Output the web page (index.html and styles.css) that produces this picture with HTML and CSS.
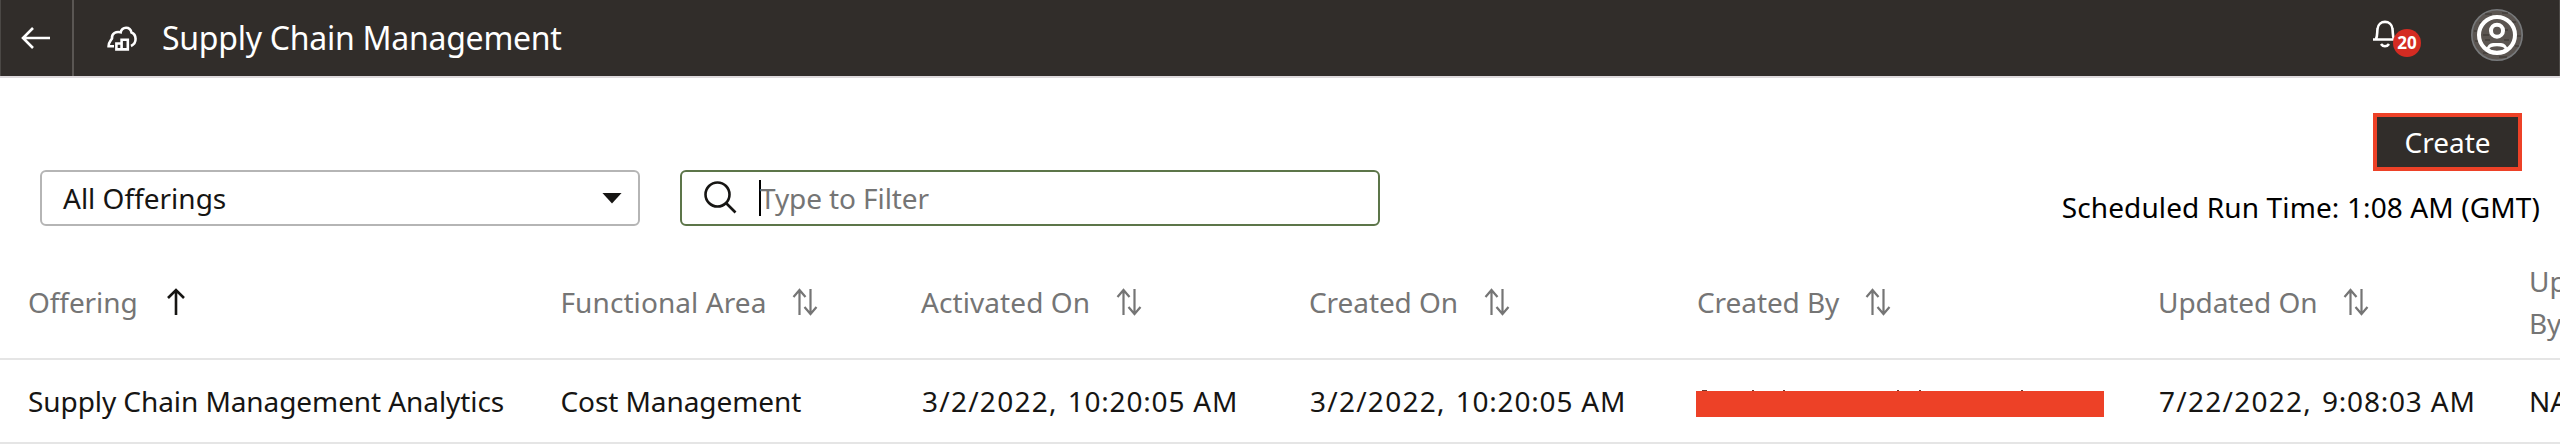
FILE: index.html
```html
<!DOCTYPE html>
<html lang="en">
<head>
<meta charset="utf-8">
<title>Supply Chain Management</title>
<link rel="stylesheet" href="styles.css">
</head>
<body>
<svg class="defs" aria-hidden="true">
  <symbol id="sort" viewBox="0 0 26 28"><path d="M7.500 27V2.500M1.500 9l6-7 6 7M18.500 1v24.500M12.500 19l6 7 6-7"/></symbol>
</svg>
<header class="topbar">
  <button class="back" aria-label="Back"><svg width="30" height="22" viewBox="0 0 30 22"><path d="M12 1L2 11l10 10M2 11h27"/></svg></button>
  <svg class="app-icon" width="32" height="28" viewBox="0 0 32 28"><path d="M8 22.300H2.600C2.600 18 4.500 17 6 14.500C5.500 9.500 10 7 14.700 8.300C16 2.500 24 2 25.500 8.500C30.500 10.500 31.500 19 25 22M10.400 25.400v-5.900h5.200v5.900zM15.600 25.400v-9.700h6.200v9.700z"/></svg>
  <h1 class="title">Supply Chain Management</h1>
  <div class="actions">
    <div class="bell"><svg width="24" height="28" viewBox="0 0 24 28"><path d="M0 19.500h22M3 19c1.500-3 1-6 1.500-10c.7-9.500 14.300-9.500 15 0c.5 4 0 7 1.500 10M8 24c2 3 6 3 8 0"/></svg><span class="badge">20</span></div>
    <svg class="avatar" width="52" height="52" viewBox="0 0 52 52"><circle class="disc" cx="26" cy="26" r="25.200"/><path class="texture" d="M14 5h7M31 4h6M8 14h4M38 13h7M3 22h5M18 19h4M34 21h3M12 26h6M44 27h6M4 32h4M14 31h5M33 31h5M44 37h4M12 44h5M28 48h8"/><circle class="ring" cx="26" cy="26" r="18"/><circle class="ring" cx="26" cy="21.700" r="6"/><path class="body" fill-rule="evenodd" d="M15 41Q17 34 22 34h8q5 0 7 7l-4 3H19zM18.500 39.500a7.500 2.200 0 0 0 15 0a7.500 2.200 0 0 0-15 0z"/></svg>
  </div>
</header>
<main>
  <section class="toolbar">
    <div class="select"><span>All Offerings</span><i class="caret"></i></div>
    <div class="search"><svg width="34" height="34" viewBox="0 0 34 34"><circle cx="13.500" cy="13.500" r="12"/><path d="M22 22l9.500 9.500"/></svg><span class="cursor"></span><span class="placeholder">Type to Filter</span></div>
    <div class="side"><button class="create">Create</button><p class="schedule">Scheduled Run Time: 1:08 AM (GMT)</p></div>
  </section>
  <div class="table">
    <div class="row head">
      <div>Offering<svg class="up" width="20" height="28" viewBox="0 0 20 28"><path d="M10 27V2.500M2 10l8-8 8 8"/></svg></div>
      <div class="wide">Functional Area<svg class="sort"><use href="#sort"/></svg></div>
      <div class="wide">Activated On<svg class="sort"><use href="#sort"/></svg></div>
      <div>Created On<svg class="sort"><use href="#sort"/></svg></div>
      <div>Created By<svg class="sort"><use href="#sort"/></svg></div>
      <div>Updated On<svg class="sort"><use href="#sort"/></svg></div>
      <div>Updated<br>By</div>
    </div>
    <div class="row data">
      <div>Supply Chain Management Analytics</div>
      <div>Cost Management</div>
      <div class="date"><span class="day">3/2/2022,</span> <span>10:20:05 AM</span></div>
      <div class="date"><span class="day">3/2/2022,</span> <span>10:20:05 AM</span></div>
      <div><svg class="redacted" width="408" height="28" viewBox="0 0 408 28"><path class="marks" d="M6 1.500h5M56 1.500h2M87 1.500h2M201 1.500h2M223 1.500h2M325 1.500h2"/><rect y="2" width="408" height="26"/></svg></div>
      <div class="date"><span class="day">7/22/2022,</span> <span>9:08:03 AM</span></div>
      <div>NA</div>
    </div>
  </div>
</main>
</body>
</html>
```

FILE: styles.css
```css
* { box-sizing: border-box; }
body { margin: 0; width: 2560px; height: 444px; overflow: hidden; background: #fff; color: #161513; font: 28px/42px "Noto Sans", sans-serif; }
main { overflow: hidden; }
button { font: inherit; padding: 0; }
h1, p { margin: 0; font-weight: 400; }
svg { fill: none; stroke: currentColor; stroke-width: 2.6; flex: none; }
.defs { position: absolute; width: 0; height: 0; }
.topbar { display: flex; align-items: center; height: 78px; background: #312d2a; color: #fff; border-bottom: 2px solid #dedadd; box-shadow: inset 1px 0 #4b4845, inset -1px 0 #4b4845; }
.back { display: flex; align-items: center; width: 74px; height: 76px; padding-left: 21px; background: none; color: #fff; border: 0; border-right: 2px solid #5a5653; }
.app-icon { margin-left: 32px; }
.title { margin-left: 24px; font-size: 32px; line-height: 44px; letter-spacing: -0.26px; white-space: nowrap; }
.actions { display: flex; align-items: flex-start; margin-left: auto; padding: 0 37px 6px 0; }
.bell { position: relative; width: 98px; padding-top: 11px; }
.bell svg { display: block; }
.badge { position: absolute; left: 20px; top: 20px; width: 28px; height: 28px; border-radius: 50%; background: #d42b22; font-size: 17px; line-height: 28px; font-weight: 700; text-align: center; }
.avatar { display: block; }
.disc { fill: #5b5551; stroke: #77797b; stroke-width: 1.6; }
.texture { stroke: #37322f; stroke-width: 1.2; }
.ring { stroke: #fff; stroke-width: 4; }
.body { fill: #fff; stroke: none; }
.toolbar { display: flex; height: 170px; padding: 35px 0 0 40px; }
.select, .search { display: flex; align-items: center; height: 56px; margin-top: 57px; border: 2px solid #b5b5b5; border-radius: 6px; }
.select { width: 600px; padding: 0 16px 0 21px; justify-content: space-between; }
.caret { width: 20px; height: 11px; background: #161513; clip-path: polygon(0 0, 100% 0, 50% 100%); }
.search { width: 700px; margin-left: 40px; padding-left: 22px; border-color: #5c7549; color: #757575; }
.search svg { color: #161513; }
.cursor { width: 2px; height: 36px; margin-left: 21px; background: #000; }
.placeholder { margin-left: -1px; letter-spacing: -0.1px; }
.side { display: flex; flex-direction: column; align-items: flex-end; margin-left: auto; padding-right: 20px; color: #000; }
.create { width: 149px; height: 58px; margin-right: 18px; background: #312d2a; color: #fff; border: 4px solid #ed4127; }
.schedule { margin-top: 15px; letter-spacing: 0.12px; white-space: nowrap; }
.row { display: grid; grid-template-columns: 532.5px 360.5px 388px 388px 461px 371px 29px; padding-left: 28px; align-items: center; border-bottom: 2px solid #e5e5e5; letter-spacing: -0.08px; white-space: nowrap; }
.row > div { display: flex; align-items: center; }
.row > div:last-child { display: block; }
.head { height: 112px; padding-bottom: 2px; color: #757575; }
.head .wide { letter-spacing: 0.08px; }
.data { height: 84px; }
.row .date { letter-spacing: 0.8px; padding-left: 1px; gap: 10px; }
.day { letter-spacing: 1.25px; }
.sort { width: 26px; height: 28px; margin-left: 26px; stroke-width: 2.2; }
.up { margin-left: 28px; color: #161513; }
.redacted { margin: 4px 0 0 -1px; fill: #ed4127; stroke: none; }
.marks { stroke: #6b3a30; stroke-width: 1; }
```
